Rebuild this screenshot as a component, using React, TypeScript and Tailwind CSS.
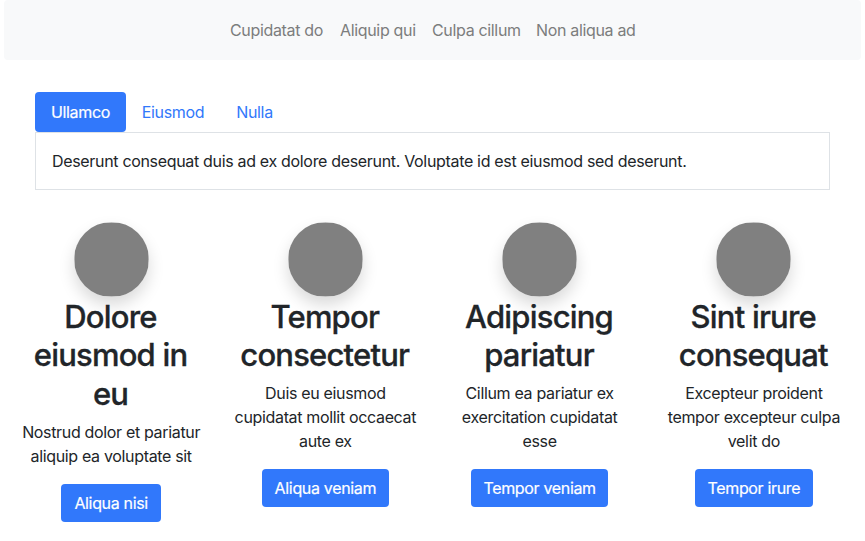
import React from "react";

const links = [
  { label: "Cupidatat do", size: "w-[94px]" },
  { label: "Aliquip qui", size: "w-[76px]" },
  { label: "Culpa cillum", size: "w-[88px]" },
  { label: "Non aliqua ad", size: "w-[99px]" },
];

const cards = [
  { title: ["Dolore", "eiusmod in", "eu"], text: ["Nostrud dolor et pariatur", "aliquip ea voluptate sit"], button: "Aliqua nisi", width: "w-[100px]" },
  { title: ["Tempor", "consectetur"], text: ["Duis eu eiusmod", "cupidatat mollit occaecat", "aute ex"], button: "Aliqua veniam", width: "w-[127px]" },
  { title: ["Adipiscing", "pariatur"], text: ["Cillum ea pariatur ex", "exercitation cupidatat", "esse"], button: "Tempor veniam", width: "w-[137px]" },
  { title: ["Sint irure", "consequat"], text: ["Excepteur proident", "tempor excepteur culpa", "velit do"], button: "Tempor irure", width: "w-[118px]" },
];

export default function App() {
  return (
    <div className="h-[541px] overflow-hidden bg-white font-['Inter',sans-serif] text-base leading-6 tracking-[-0.335px] text-[#212529]">
      <nav className="mx-1 flex h-[60px] items-center justify-center gap-4 rounded bg-[#f8f9fa] text-[#7c7d7d]">
        {links.map((l) => (
          <a key={l.label} className={`whitespace-nowrap ${l.size}`}>{l.label}</a>
        ))}
      </nav>
      <section className="mx-[35px] mt-8">
        <div className="flex h-10 text-[#3178fb]">
          <button className="w-[91px] rounded bg-[#3178fb] text-white [-webkit-text-stroke:0.2px]">Ullamco</button>
          <button className="w-[94px]">Eiusmod</button>
          <button className="w-[69px]">Nulla</button>
        </div>
        <div className="h-[58px] border border-[#dee2e6] p-4 tracking-[-0.325px]">
          Deserunt consequat duis ad ex dolore deserunt. Voluptate id est eiusmod sed deserunt.
        </div>
      </section>
      <main className="mx-1 mt-8 grid grid-cols-4">
        {cards.map((c) => (
          <article key={c.button} className="flex flex-col items-center text-center">
            <div className="h-[75px] w-[75px] rounded-full shadow-[0_8px_16px_rgba(0,0,0,0.15)]">
              <svg viewBox="0 0 75 75" className="block h-full w-full">
                <clipPath id="avatar">
                  <rect x="0.4" y="0.5" width="74.2" height="74" />
                </clipPath>
                <circle cx="37.5" cy="37.5" r="37.5" fill="#808080" clipPath="url(#avatar)" />
              </svg>
            </div>
            <h2 className="mt-[0.8px] mb-[6.8px] pr-[1.2px] text-[31px] leading-[38.4px] font-medium tracking-[-0.8px] [-webkit-text-stroke:0.3px]">
              {c.title.map((line) => <span key={line} className="block whitespace-nowrap">{line}</span>)}
            </h2>
            <p className="mb-4">
              {c.text.map((line) => <span key={line} className="block whitespace-nowrap">{line}</span>)}
            </p>
            <button className={`h-[38px] rounded bg-[#3178fb] text-white [-webkit-text-stroke:0.2px] ${c.width}`}>{c.button}</button>
          </article>
        ))}
      </main>
    </div>
  );
}
